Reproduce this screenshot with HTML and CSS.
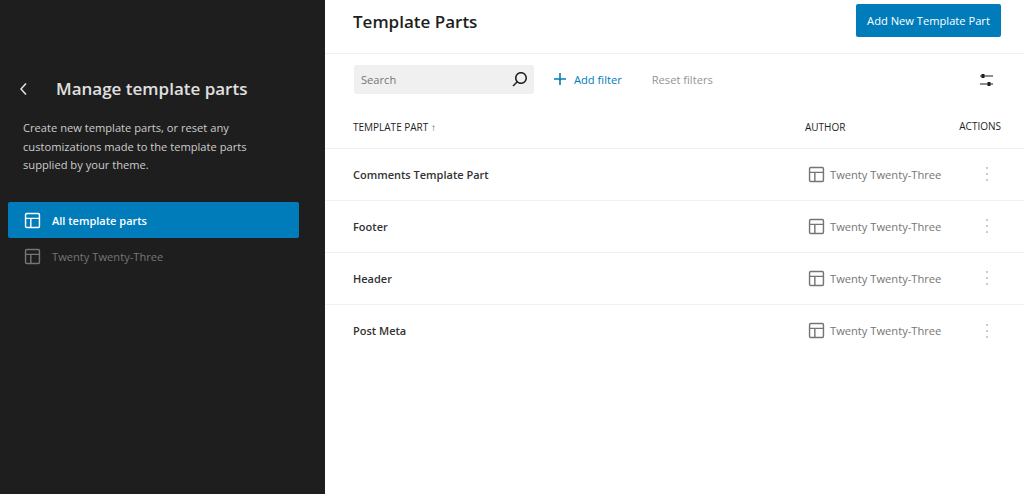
FILE: index.html
```html
<!DOCTYPE html>
<html>
  <head>
    <title>Template Parts</title>
    <link rel="stylesheet" href="styles.css">
  </head>
  <body>
    <svg class="defs" width="0" height="0">
      <symbol id="layout" viewBox="0 0 24 24">
        <path d="M18 5.500H6a.5.5 0 0 0-.5.5v12a.5.5 0 0 0 .5.5h12a.5.5 0 0 0 .5-.5V6a.5.5 0 0 0-.5-.5zM6 4h12a2 2 0 0 1 2 2v12a2 2 0 0 1-2 2H6a2 2 0 0 1-2-2V6a2 2 0 0 1 2-2zm-.5 5H18.500v1.500H11V18.500H9.500V10.500H5.500V9z" fill="currentColor"/>
      </symbol>
    </svg>

    <div class="sidebar">
      <div class="side_title">
        <svg class="back" width="24" height="24" viewBox="0 0 24 24"><path d="M14.600 7l-1.200-1L8 12l5.400 6 1.200-1-4.600-5z" fill="currentColor"/></svg>
        <h2>Manage template parts</h2>
      </div>
      <p class="side_desc">Create new template parts, or reset any customizations made to the template parts supplied by your theme.</p>
      <div class="side_nav">
        <div class="nav_item active">
          <svg width="23" height="23"><use href="#layout"/></svg>
          <span>All template parts</span>
        </div>
        <div class="nav_item">
          <svg width="23" height="23"><use href="#layout"/></svg>
          <span>Twenty Twenty-Three</span>
        </div>
      </div>
    </div>

    <div class="main">
      <div class="header">
        <h1>Template Parts</h1>
        <div class="add_btn">Add New Template Part</div>
      </div>

      <div class="filters">
        <div class="search">
          <span>Search</span>
          <svg width="24" height="24" viewBox="0 0 24 24"><path d="M13 5c-3.300 0-6 2.700-6 6 0 1.400.5 2.700 1.300 3.700l-3.800 3.800 1 1 3.800-3.800c1 .8 2.300 1.300 3.700 1.300 3.300 0 6-2.700 6-6S16.300 5 13 5zm0 10.500c-2.500 0-4.500-2-4.500-4.500s2-4.500 4.500-4.500 4.500 2 4.500 4.500-2 4.500-4.500 4.500z" fill="currentColor"/></svg>
        </div>
        <div class="add_filter">
          <svg width="24" height="24" viewBox="0 0 24 24"><path d="M18 11.200h-5.200V6h-1.600v5.200H6v1.600h5.200V18h1.600v-5.200H18z" fill="currentColor"/></svg>
          <span>Add filter</span>
        </div>
        <div class="reset">Reset filters</div>
        <svg class="view_opts" width="24" height="24" viewBox="0 0 24 24"><path d="M5 8.400h1.500V7h3v1.400H18v1.200H9.500V11h-3V9.600H5zM5 16.400h7.500V15h3v1.400H18v1.200h-2.500V19h-3v-1.400H5z" fill="currentColor"/></svg>
      </div>

      <div class="row head_row">
        <div class="col_name">TEMPLATE PART <span class="arrow">↑</span></div>
        <div class="col_author">AUTHOR</div>
        <div class="col_actions">ACTIONS</div>
      </div>

      <div class="row">
        <div class="col_name">Comments Template Part</div>
        <div class="col_author"><svg width="23" height="23"><use href="#layout"/></svg><span>Twenty Twenty-Three</span></div>
        <div class="col_actions"><div class="dots"><i></i><i></i><i></i></div></div>
      </div>
      <div class="row">
        <div class="col_name">Footer</div>
        <div class="col_author"><svg width="23" height="23"><use href="#layout"/></svg><span>Twenty Twenty-Three</span></div>
        <div class="col_actions"><div class="dots"><i></i><i></i><i></i></div></div>
      </div>
      <div class="row">
        <div class="col_name">Header</div>
        <div class="col_author"><svg width="23" height="23"><use href="#layout"/></svg><span>Twenty Twenty-Three</span></div>
        <div class="col_actions"><div class="dots"><i></i><i></i><i></i></div></div>
      </div>
      <div class="row last_row">
        <div class="col_name">Post Meta</div>
        <div class="col_author"><svg width="23" height="23"><use href="#layout"/></svg><span>Twenty Twenty-Three</span></div>
        <div class="col_actions"><div class="dots"><i></i><i></i><i></i></div></div>
      </div>
    </div>
  </body>
</html>
```

FILE: styles.css
```css
html, body {
  height: 100%;
}
body {
  display: flex;
  margin: 0;
  background-color: #fff;
  font-family: "Open Sans", "Noto Sans", sans-serif;
  font-size: 11.150px;
  overflow: hidden;
}
.defs {
  position: absolute;
}
.sidebar {
  display: flex;
  flex-direction: column;
  flex: 0 0 325px;
  box-sizing: border-box;
  padding: 71px 26px 0 8px;
  background-color: #1e1e1e;
  color: #ccc;
}
.side_title {
  display: flex;
  align-items: center;
  height: 36px;
  padding-left: 4px;
}
.side_title h2 {
  margin: 0 0 2px 20px;
  color: #e0e0e0;
  font-size: 17px;
  font-weight: 600;
}
.back {
  color: #e0e0e0;
}
.side_desc {
  margin: 12px 0 0 15px;
  width: 250px;
  line-height: 18.500px;
}
.side_nav {
  margin-top: 27.500px;
}
.nav_item {
  display: flex;
  align-items: center;
  gap: 8px;
  height: 36px;
  padding-left: 13px;
  border-radius: 2px;
  color: #757575;
}
.nav_item svg {
  flex: none;
}
.nav_item.active {
  background-color: #007cba;
  color: #fff;
  font-size: 11px;
  font-weight: 600;
}
.main {
  flex: 1;
  min-width: 0;
}
.header {
  display: flex;
  justify-content: space-between;
  align-items: center;
  box-sizing: border-box;
  height: 54px;
  padding: 0 23px 12px 28px;
  border-bottom: 1px solid #f0f0f0;
}
.header h1 {
  margin: 2px 0 0 0;
  color: #1e1e1e;
  font-size: 17px;
  font-weight: 600;
}
.add_btn {
  display: flex;
  align-items: center;
  justify-content: center;
  width: 145px;
  height: 33px;
  border-radius: 2px;
  background-color: #007cba;
  color: #fff;
}
.filters {
  display: flex;
  align-items: center;
  height: 51px;
  padding: 0 25px 1px 29px;
  box-sizing: border-box;
}
.search {
  display: flex;
  align-items: center;
  justify-content: space-between;
  box-sizing: border-box;
  width: 180px;
  height: 29px;
  padding: 0 2px 0 7px;
  border-radius: 2px;
  background-color: #f0f0f0;
  color: #757575;
}
.search svg {
  color: #1e1e1e;
}
.add_filter {
  display: flex;
  align-items: center;
  gap: 2px;
  margin-left: 14px;
  color: #007cba;
}
.reset {
  margin-left: 30px;
  color: #949494;
}
.view_opts {
  margin-left: auto;
  color: #1e1e1e;
}
.row {
  display: flex;
  align-items: center;
  box-sizing: border-box;
  height: 52px;
  padding: 0 23px 1px 28px;
  border-bottom: 1px solid #f0f0f0;
  color: #333;
  font-size: 11px;
  font-weight: 600;
}
.last_row {
  border-bottom: 0;
}
.head_row {
  height: 44px;
  padding-bottom: 0;
  color: #1e1e1e;
  font-size: 10px;
  font-weight: 400;
}
.arrow {
  color: #555;
}
.col_name {
  flex: 1;
}
.col_author {
  display: flex;
  align-items: center;
  gap: 2px;
  width: 154px;
  color: #757575;
  font-size: 11.150px;
  font-weight: 400;
}
.head_row .col_author {
  color: #1e1e1e;
  font-size: 10px;
}
.col_author svg {
  flex: none;
}
.col_actions {
  display: flex;
  justify-content: flex-end;
  width: 42px;
}
.head_row .col_actions {
  padding-bottom: 2px;
}
.dots {
  display: flex;
  flex-direction: column;
  gap: 4px;
  margin-right: 13.500px;
}
.dots i {
  width: 2px;
  height: 2px;
  border-radius: 50%;
  background-color: #bbb;
}
```
